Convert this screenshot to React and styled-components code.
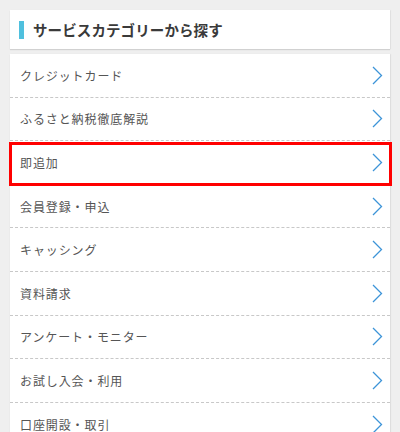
import React from "react";
import styled, { createGlobalStyle } from "styled-components";

const Global = createGlobalStyle`
  html, body { margin: 0; padding: 0; background: #efefef; }
  body { font-family: "Noto Sans CJK JP", "Noto Sans", sans-serif; }
`;

const Page = styled.div`
  padding: 10px 10px 0;
  width: 380px;
  display: flex;
  flex-direction: column;
  gap: 5px;
`;

const HeaderCard = styled.div`
  background: #fff;
  height: 39px;
  display: flex;
  align-items: center;
  padding-left: 9px;
  box-shadow: 0 1px 1px rgba(0, 0, 0, 0.12), 1px 0 1px rgba(0, 0, 0, 0.04);
`;

const Bar = styled.span`
  width: 5px;
  height: 18px;
  background: #4fc0de;
  margin-right: 9px;
`;

const Title = styled.h2`
  margin: 0;
  font-size: 14.5px;
  font-weight: 700;
  color: #3a3a3a;
  letter-spacing: 0.1px;
`;

const ListCard = styled.ul`
  list-style: none;
  margin: 0;
  padding: 0;
  background: #fff;
  box-shadow: 0 1px 1px rgba(0, 0, 0, 0.1), 1px 0 1px rgba(0, 0, 0, 0.05);
`;

const Row = styled.li`
  position: relative;
  height: 42.6px;
  display: flex;
  align-items: center;
  justify-content: space-between;
  padding: 0 7px 0 10px;
  border-bottom: 1px dashed #c8c8c8;
  color: #555;
  font-size: 12px;
  letter-spacing: 0.9px;
`;

const Highlight = styled.span`
  position: absolute;
  left: -1px;
  right: -2px;
  top: 1px;
  bottom: -2px;
  border: 3px solid #f00;
  pointer-events: none;
`;

const Chevron = () => (
  <svg width="11" height="19" viewBox="0 0 11 19">
    <polyline points="1,1 9.5,9.5 1,18" fill="none" stroke="#3d94d8" strokeWidth="1.3" />
  </svg>
);

const items = [
  "クレジットカード",
  "ふるさと納税徹底解説",
  "即追加",
  "会員登録・申込",
  "キャッシング",
  "資料請求",
  "アンケート・モニター",
  "お試し入会・利用",
  "口座開設・取引",
];

export default function App() {
  return (
    <>
      <Global />
      <Page>
        <HeaderCard>
          <Bar />
          <Title>サービスカテゴリーから探す</Title>
        </HeaderCard>
        <ListCard>
          {items.map((t) => (
            <Row key={t}>
              <span>{t}</span>
              <Chevron />
              {t === "即追加" && <Highlight />}
            </Row>
          ))}
        </ListCard>
      </Page>
    </>
  );
}
